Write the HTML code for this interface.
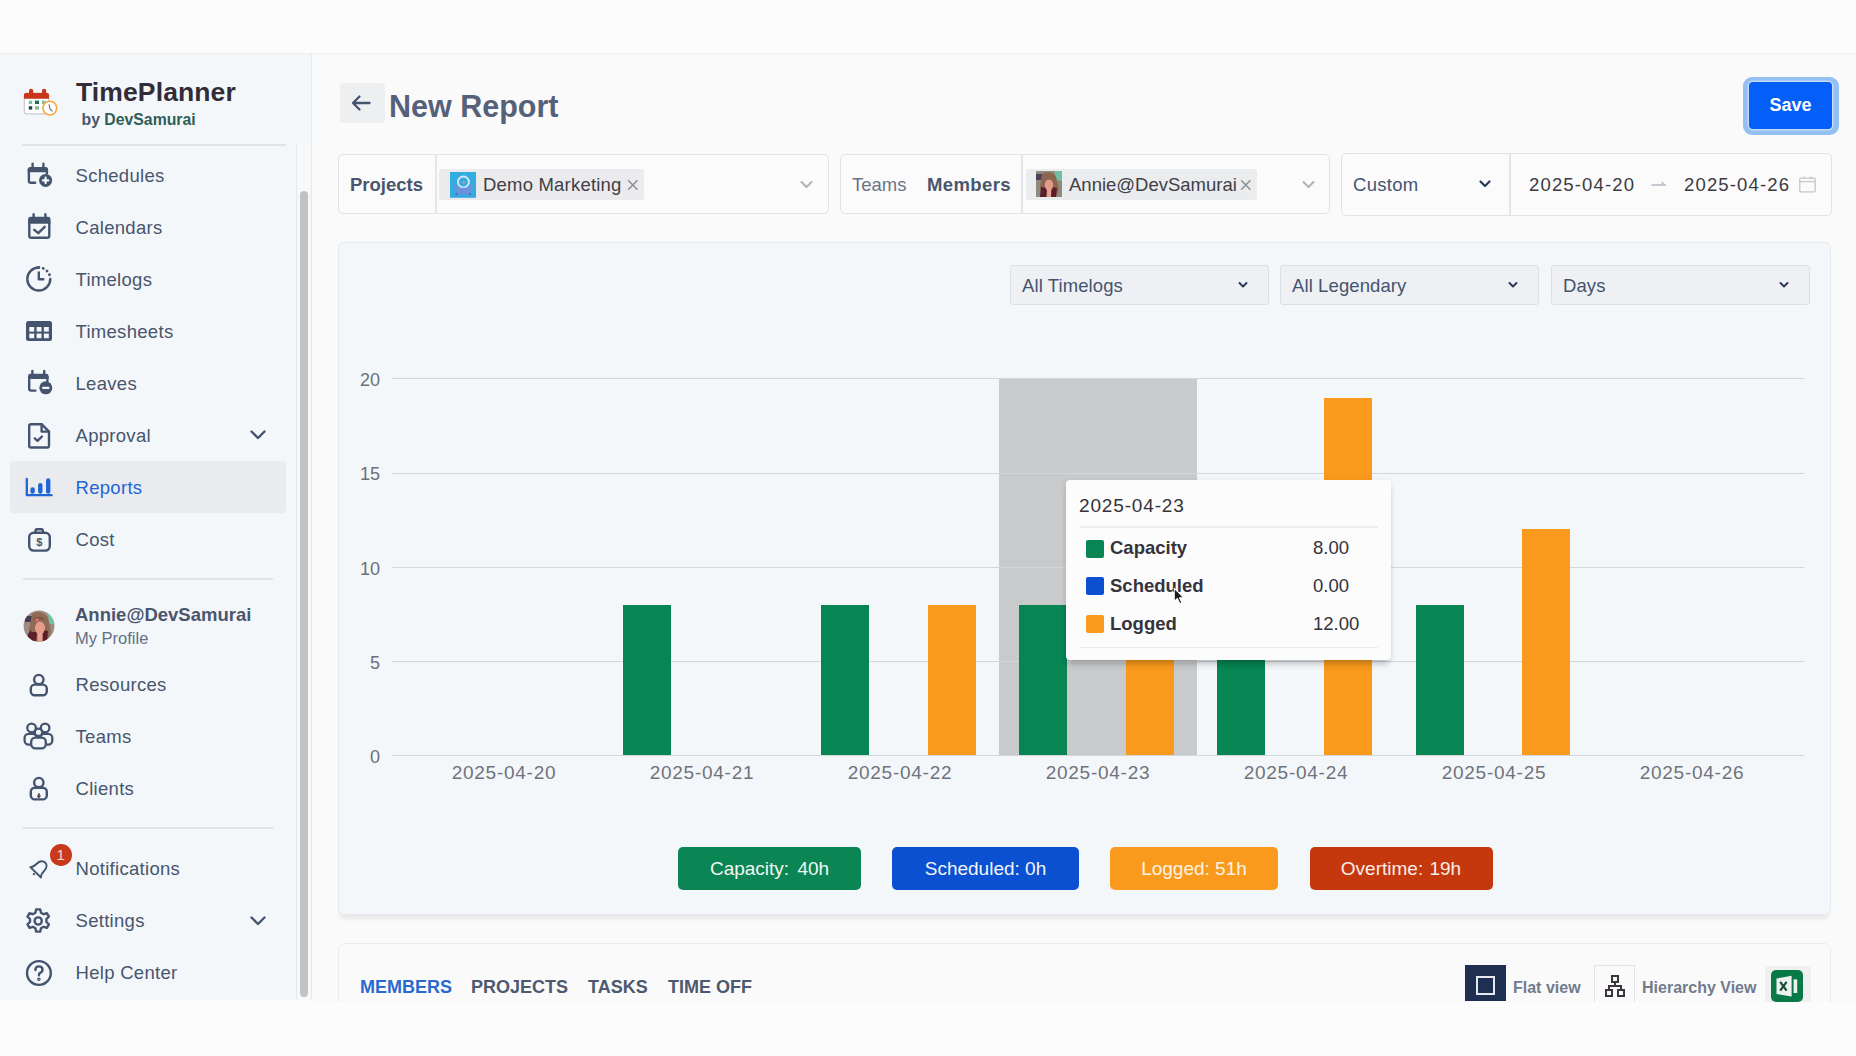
<!DOCTYPE html>
<html><head><meta charset="utf-8">
<style>
*{box-sizing:border-box;margin:0;padding:0}
html,body{width:1856px;height:1056px;overflow:hidden;background:#fcfcfc;font-family:"Liberation Sans",sans-serif;color:#44546f}
.abs{position:absolute}
.t{position:absolute;white-space:nowrap}
#topline{left:0;top:53px;width:1856px;height:1px;background:#eceef1}
#side{left:0;top:54px;width:311px;height:946px;background:#f4f7fa}
#sideborder{left:311px;top:54px;width:1px;height:946px;background:#e8e8e9}
#main{left:312px;top:54px;width:1544px;height:948px;background:#fafafa}
.nav{position:absolute;left:75.5px;margin-top:1px;height:30px;line-height:30px;font-size:18.5px;letter-spacing:0.3px;color:#47556d;white-space:nowrap}
.ico{position:absolute;left:0;top:0}
.sep{position:absolute;height:2px;background:#dfe2e6}
</style></head><body>
<div id="topline" class="abs"></div>
<div id="side" class="abs"></div>
<div id="sideborder" class="abs"></div>
<div id="main" class="abs"></div>

<!-- SIDEBAR -->
<!-- logo -->
<svg class="abs" style="left:18px;top:82px" width="44" height="40" viewBox="0 0 44 40">
  <rect x="6.3" y="11" width="24.4" height="20.8" rx="2" fill="#fff" stroke="#c9c9cb" stroke-width="1.2"/>
  <path d="M6 13 q0-2 2-2 h21 q2 0 2 2 v3.8 h-25z" fill="#c9361a"/>
  <rect x="11" y="6.8" width="4.2" height="6" rx="2" fill="#c9361a"/>
  <rect x="24" y="6.8" width="4.2" height="6" rx="2" fill="#c9361a"/>
  <rect x="10.8" y="18.6" width="3.4" height="3.4" fill="#7fbf9f"/>
  <rect x="17" y="18.6" width="4" height="3.4" fill="#1e6e4c"/>
  <rect x="24" y="18.6" width="3.4" height="3.4" fill="#7fbf9f"/>
  <rect x="10.8" y="24.2" width="3.4" height="3.4" fill="#1d473f"/>
  <rect x="17" y="24.2" width="4" height="3.4" fill="#7fbf9f"/>
  <circle cx="31.8" cy="26.1" r="6.9" fill="#fff" stroke="#f4a93b" stroke-width="1.6"/>
  <path d="M31 22.3 L32 27 L34.6 29.3" fill="none" stroke="#6a6e77" stroke-width="1.1"/>
</svg>
<div class="t" style="left:76px;top:77px;font-size:26.5px;letter-spacing:0.12px;line-height:30px;font-weight:bold;color:#322b38">TimePlanner</div>
<div class="t" style="left:81.5px;top:109.5px;font-size:15.8px;line-height:20px;font-weight:bold;color:#4a566c">by <span style="color:#2f5d57">DevSamurai</span></div>
<div class="sep" style="left:22px;top:144px;width:264px"></div>

<!-- nav items -->
<div class="nav" style="top:160px">Schedules</div>
<div class="nav" style="top:212px">Calendars</div>
<div class="nav" style="top:264px">Timelogs</div>
<div class="nav" style="top:316px">Timesheets</div>
<div class="nav" style="top:368px">Leaves</div>
<div class="nav" style="top:420px">Approval</div>
<div class="abs" style="left:10px;top:461px;width:276px;height:52px;background:#e9ebee;border-radius:4px"></div>
<div class="nav" style="top:472px;color:#1f66d6">Reports</div>
<div class="nav" style="top:524px">Cost</div>
<div class="sep" style="left:23px;top:578px;width:250px"></div>

<!-- nav icons -->
<svg class="abs" style="left:22px;top:158px" width="32" height="32" viewBox="0 0 32 32" fill="none" stroke="#44546f" stroke-width="2.4" stroke-linecap="round" stroke-linejoin="round">
  <path d="M13.2 24.8 H9 Q6.9 24.8 6.9 22.7 V12"/>
  <path d="M24.9 12 V15.6"/>
  <path d="M5.7 14.2 V11.4 Q5.7 8.9 8.2 8.9 H23.6 Q26.1 8.9 26.1 11.4 V14.2 Z" fill="#44546f" stroke="none"/>
  <path d="M10.6 5.8 v3.4 M21.4 5.8 v3.4"/>
  <circle cx="23.6" cy="22.4" r="6.5" fill="#44546f" stroke="none"/>
  <path d="M23.6 19.7 v5.4 M20.9 22.4 h5.4" stroke="#f4f7fa" stroke-width="2.2"/>
</svg>
<svg class="abs" style="left:22px;top:210px" width="32" height="32" viewBox="0 0 32 32" fill="none" stroke="#44546f" stroke-width="2.4" stroke-linecap="round" stroke-linejoin="round">
  <path d="M7.3 12 V25.7 Q7.3 27.8 9.4 27.8 H25.2 Q27.3 27.8 27.3 25.7 V12"/>
  <path d="M6.1 13.8 V9.4 Q6.1 6.8 8.7 6.8 H25.9 Q28.5 6.8 28.5 9.4 V13.8 Z" fill="#44546f" stroke="none"/>
  <path d="M11.6 4.2 v3.4 M23.4 4.2 v3.4"/>
  <path d="M12.2 19.8 l4.1 3.4 l6.4-6.4"/>
</svg>
<svg class="abs" style="left:22px;top:262px" width="32" height="32" viewBox="0 0 32 32" fill="none" stroke="#44546f" stroke-width="2.4" stroke-linecap="round" stroke-linejoin="round">
  <path d="M16.8 5.5 A11.5 11.5 0 1 0 28.3 17"/>
  <path d="M16.8 5.5 A11.5 11.5 0 0 1 28.3 17" stroke-dasharray="0.1 4.4" stroke-width="2.8"/>
  <path d="M16.8 10.5 v6.8 h4.5"/>
</svg>
<svg class="abs" style="left:22px;top:314px" width="32" height="32" viewBox="0 0 32 32">
  <rect x="4" y="7" width="26" height="20" rx="2.5" fill="#44546f"/>
  <rect x="7.3" y="13" width="4.9" height="4.6" fill="#f4f7fa"/>
  <rect x="14.6" y="13" width="4.9" height="4.6" fill="#f4f7fa"/>
  <rect x="21.9" y="13" width="4.9" height="4.6" fill="#f4f7fa"/>
  <rect x="7.3" y="19.6" width="4.9" height="4.6" fill="#f4f7fa"/>
  <rect x="14.6" y="19.6" width="4.9" height="4.6" fill="#f4f7fa"/>
  <rect x="21.9" y="19.6" width="4.9" height="4.6" fill="#f4f7fa"/>
</svg>
<svg class="abs" style="left:22px;top:366px" width="32" height="32" viewBox="0 0 32 32" fill="none" stroke="#44546f" stroke-width="2.4" stroke-linecap="round" stroke-linejoin="round">
  <path d="M13.4 24.6 H9.2 Q7.2 24.6 7.2 22.6 V11"/>
  <path d="M25.4 11 V15"/>
  <path d="M6 13 V10.2 Q6 7.8 8.4 7.8 H24.2 Q26.6 7.8 26.6 10.2 V13 Z" fill="#44546f" stroke="none"/>
  <path d="M10.4 5 v3.2 M22.2 5 v3.2"/>
  <circle cx="23.8" cy="21.8" r="6.5" fill="#44546f" stroke="none"/>
  <path d="M21.1 21.8 h5.4" stroke="#f4f7fa" stroke-width="2.2"/>
</svg>
<svg class="abs" style="left:22px;top:418px" width="32" height="32" viewBox="0 0 32 32" fill="none" stroke="#44546f" stroke-width="2.4" stroke-linecap="round" stroke-linejoin="round">
  <path d="M19.6 6.2 H9 q-1.8 0-1.8 1.8 V27.7 q0 1.8 1.8 1.8 h16.2 q1.8 0 1.8-1.8 V13.6 Z"/>
  <path d="M19.6 6.2 v7.4 h7.4"/>
  <path d="M12.8 20.4 l2.7 2.5 l4.4-4.4"/>
</svg>
<svg class="abs" style="left:22px;top:470px" width="32" height="32" viewBox="0 0 32 32" fill="none" stroke="#1f66d6" stroke-linecap="round" stroke-linejoin="round">
  <path d="M4.8 8.8 V25.2 H29.6" stroke-width="2.3"/>
  <path d="M10.6 19.4 v2.2" stroke-width="4.4"/>
  <path d="M18.3 15.2 v6.4" stroke-width="4.4"/>
  <path d="M26.2 10.4 v11.2" stroke-width="4.4"/>
</svg>
<svg class="abs" style="left:22px;top:522px" width="32" height="32" viewBox="0 0 32 32" fill="none" stroke="#44546f" stroke-width="2.4" stroke-linecap="round" stroke-linejoin="round">
  <path d="M13.6 10.8 V8.5 q0-1.3 1.3-1.3 h4.6 q1.3 0 1.3 1.3 v2.3"/>
  <rect x="7.2" y="10.8" width="20.6" height="17.8" rx="4.5"/>
  <text x="17.3" y="24.3" font-family="Liberation Sans" font-weight="bold" font-size="11" fill="#44546f" stroke="none" text-anchor="middle">$</text>
</svg>



<!-- chevrons -->
<svg class="abs" style="left:247px;top:425px" width="22" height="20" viewBox="0 0 22 20" fill="none" stroke="#44546f" stroke-width="2.4" stroke-linecap="round" stroke-linejoin="round"><path d="M4.5 6.5 l6.5 6.5 l6.5-6.5"/></svg>
<!-- profile -->
<svg class="abs" style="left:23px;top:610px" width="32" height="32" viewBox="0 0 32 32">
  <defs><clipPath id="av1"><circle cx="16" cy="16" r="15.4"/></clipPath></defs>
  <g clip-path="url(#av1)">
    <rect width="32" height="32" fill="#9d8c84"/>
    <rect x="2" y="6" width="7" height="6" fill="#4a3a52"/>
    <path d="M24 2 L32 6 L32 14 L27 14 Z" fill="#74c4a4"/>
    <path d="M9 4 C14 1 22 2 25 8 L28 22 L24 32 L8 32 L6 20 Z" fill="#8f6a55"/>
    <path d="M8 20 C9 24 10 30 12 32 L4 32 L5 24 Z" fill="#5a1f2b"/>
    <path d="M8.5 22 L14 22 L13 32 L9 32 Z" fill="#5e1e2a"/>
    <path d="M20 20 L25 21 L24 32 L19 32 Z" fill="#5a1e2a"/>
    <ellipse cx="17" cy="18" rx="5" ry="6.5" fill="#e69c8a"/>
    <rect x="14.5" y="23" width="5" height="9" fill="#e7a595"/>
    <path d="M11 9 C13 6 20 6 22 10 C19 9 14 9 11 11Z" fill="#7a5742"/>
    <circle cx="14" cy="10" r="1.8" fill="#e7745c"/>
  </g>
</svg>
<div class="t" style="left:75px;top:603px;font-size:18.5px;line-height:24px;font-weight:bold;color:#4a566c">Annie@DevSamurai</div>
<div class="t" style="left:75px;top:628px;font-size:16.5px;line-height:20px;color:#626f86">My Profile</div>
<div class="nav" style="top:669px">Resources</div>
<div class="nav" style="top:721px">Teams</div>
<div class="nav" style="top:773px">Clients</div>
<svg class="abs" style="left:22px;top:669px" width="32" height="32" viewBox="0 0 32 32" fill="none" stroke="#44546f" stroke-width="2.4" stroke-linecap="round" stroke-linejoin="round">
  <circle cx="16.8" cy="10.6" r="4.7"/>
  <rect x="8.8" y="15.6" width="16" height="10.6" rx="4"/>
</svg>
<svg class="abs" style="left:22px;top:721px" width="32" height="32" viewBox="0 0 32 32" fill="none" stroke="#44546f" stroke-width="2.3" stroke-linecap="round" stroke-linejoin="round">
  <circle cx="9.6" cy="6.9" r="4.3"/>
  <circle cx="23.1" cy="6.9" r="4.3"/>
  <rect x="2.6" y="12.8" width="12" height="10.8" rx="4"/>
  <rect x="18.3" y="12.8" width="12" height="10.8" rx="4"/>
  <circle cx="16.5" cy="11.3" r="3.7" fill="#f4f7fa"/>
  <rect x="9.2" y="16.6" width="14.6" height="10.8" rx="4.2" fill="#f4f7fa"/>
</svg>
<svg class="abs" style="left:22px;top:773px" width="32" height="32" viewBox="0 0 32 32" fill="none" stroke="#44546f" stroke-width="2.4" stroke-linecap="round" stroke-linejoin="round">
  <circle cx="16.8" cy="9.6" r="4.7"/>
  <rect x="8.8" y="14.8" width="16" height="11.6" rx="4"/>
  <path d="M16.8 20.4 l-1.3 3.2 l1.3 1.4 l1.3-1.4z" fill="#5b3a44" stroke="#5b3a44" stroke-width="0.8"/>
</svg>
<div class="sep" style="left:23px;top:827px;width:250px"></div>
<!-- notifications -->
<div class="nav" style="top:853px">Notifications</div>
<svg class="abs" style="left:22px;top:850px" width="32" height="34" viewBox="0 0 32 34" fill="none" stroke="#44546f" stroke-width="2.3" stroke-linecap="round" stroke-linejoin="round">
  <g transform="translate(17.6 18.2) rotate(44) scale(0.86)">
    <path d="M-8.6 6.6 C-6.4 4.6 -6 2.6 -6 -1.4 C-6 -6.4 -3.2 -9.2 0 -9.2 C3.2 -9.2 6 -6.4 6 -1.4 C6 2.6 6.4 4.6 8.6 6.6 Z"/>
    <circle cx="0" cy="9.6" r="1.3" fill="#44546f" stroke="none"/>
  </g>
</svg>
<div class="abs" style="left:49.5px;top:844px;width:22.5px;height:22px;border-radius:50%;background:#c9391c;color:#f6dcd5;font-weight:normal;font-size:15px;line-height:22px;text-align:center">1</div>
<div class="nav" style="top:905px">Settings</div>
<svg class="abs" style="left:22px;top:905px" width="32" height="32" viewBox="0 0 32 32" fill="none" stroke="#44546f" stroke-width="2.4" stroke-linecap="round" stroke-linejoin="round">
  <path d="M14.2 4.4 h4 l0.8 3.3 l2.6 1.5 l3.3-1 l2 3.4 l-2.5 2.4 v3 l2.5 2.4 l-2 3.4 l-3.3-1 l-2.6 1.5 l-0.8 3.3 h-4 l-0.8-3.3 l-2.6-1.5 l-3.3 1 l-2-3.4 l2.5-2.4 v-3 l-2.5-2.4 l2-3.4 l3.3 1 l2.6-1.5z"/>
  <circle cx="16.2" cy="16" r="3.6"/>
</svg>
<svg class="abs" style="left:247px;top:911px" width="22" height="20" viewBox="0 0 22 20" fill="none" stroke="#44546f" stroke-width="2.4" stroke-linecap="round" stroke-linejoin="round"><path d="M4.5 6.5 l6.5 6.5 l6.5-6.5"/></svg>
<div class="nav" style="top:957px">Help Center</div>
<svg class="abs" style="left:22px;top:957px" width="32" height="32" viewBox="0 0 32 32" fill="none" stroke="#44546f" stroke-width="2.4" stroke-linecap="round" stroke-linejoin="round">
  <circle cx="16.9" cy="16" r="11.9"/>
  <path d="M13.4 13 q0-3.6 3.5-3.6 q3.6 0 3.6 3.3 q0 2.2-2.4 3.2 q-1.2 0.6-1.2 2.4"/>
  <circle cx="16.9" cy="22.2" r="0.6" fill="#44546f"/>
</svg>
<!-- scrollbar -->
<div class="abs" style="left:296px;top:144px;width:15px;height:856px;background:#f6f8fa;border-left:1px solid #e6e8ea"></div>
<div class="abs" style="left:300px;top:191px;width:8px;height:806px;background:#c1c2c4;border-radius:4px"></div>


<!-- MAIN HEADER -->
<div class="abs" style="left:340px;top:83px;width:45px;height:40px;background:#eeeff1;border-radius:4px"></div>
<svg class="abs" style="left:348px;top:91px" width="26" height="24" viewBox="0 0 26 24" fill="none" stroke="#44546f" stroke-width="2.3" stroke-linecap="round" stroke-linejoin="round"><path d="M21.5 12 H5.5 M11.5 5.5 L5 12 L11.5 18.5"/></svg>
<div class="t" style="left:389px;top:89px;font-size:30.5px;line-height:34px;font-weight:bold;color:#55617a">New Report</div>
<div class="abs" style="left:1742.5px;top:76.5px;width:96px;height:58.5px;border-radius:9px;background:#93bff2"></div>
<div class="abs" style="left:1748.6px;top:82.4px;width:83.7px;height:46.8px;border-radius:4px;background:#045ef8;box-shadow:0 0 0 1.5px #c6dbf6;color:#fff;font-weight:bold;font-size:18px;line-height:46px;text-align:center">Save</div>

<!-- FILTERS -->
<div class="abs" style="left:338px;top:154px;width:491px;height:60px;border:1.5px solid #e1e3e7;border-radius:5px;background:#fbfbfc"></div>
<div class="abs" style="left:435px;top:155px;width:1.5px;height:58px;background:#e4e6ea"></div>
<div class="t" style="left:350px;top:169.8px;font-size:18.5px;line-height:30px;font-weight:bold;color:#4a566c">Projects</div>
<div class="abs" style="left:439.3px;top:169px;width:204.7px;height:30.5px;background:#ebebed;border-radius:3px"></div>
<svg class="abs" style="left:449.6px;top:171.6px" width="26.4" height="26.4" viewBox="0 0 26 26">
  <rect width="26" height="26" fill="#33ade0"/>
  <rect y="25" width="26" height="1" fill="#7fb8ee"/>
  <circle cx="13.2" cy="9.8" r="5.4" fill="none" stroke="#d6e6f8" stroke-width="1.9"/>
  <path d="M3.6 13.6 L6.4 12.2 L8.6 15.6 H18 L20.2 12.2 L23 13.6 L21 20 L19.8 22.4 H6.8 L5.6 20 Z" fill="#6a92da"/>
  <circle cx="13.4" cy="10" r="1.5" fill="#8fa3c4"/>
  <path d="M6.6 21 l-0.6 1.8 M19.6 21 l0.6 1.8" stroke="#3a62c8" stroke-width="1.4"/>
</svg>
<div class="t" style="left:483px;top:169.8px;font-size:18.5px;letter-spacing:0.2px;line-height:30px;color:#423e46">Demo Marketing</div>
<svg class="abs" style="left:626px;top:178px" width="14" height="14" viewBox="0 0 14 14" stroke="#8d9097" stroke-width="1.6" stroke-linecap="round"><path d="M2.6 2.8 L11 11.2 M11 2.8 L2.6 11.2"/></svg>
<svg class="abs" style="left:797px;top:176px" width="18" height="16" viewBox="0 0 18 16" fill="none" stroke="#adb1b8" stroke-width="2" stroke-linecap="round" stroke-linejoin="round"><path d="M4.5 6 l5 5 l5-5"/></svg>

<div class="abs" style="left:840px;top:154px;width:490px;height:60px;border:1.5px solid #e1e3e7;border-radius:5px;background:#fbfbfc"></div>
<div class="abs" style="left:1021px;top:155px;width:1.5px;height:58px;background:#e4e6ea"></div>
<div class="t" style="left:852px;top:169.8px;font-size:18.5px;line-height:30px;color:#6b7486">Teams</div>
<div class="t" style="left:927px;top:169.8px;font-size:18.5px;letter-spacing:0.4px;line-height:30px;font-weight:bold;color:#4a566c">Members</div>
<div class="abs" style="left:1026px;top:169px;width:231px;height:31px;background:#ebecee;border-radius:3px"></div>
<svg class="abs" style="left:1036px;top:171px" width="26" height="26" viewBox="0 0 26 26">
  <rect width="26" height="26" fill="#8f8a80"/>
  <rect x="0" y="3" width="6" height="6" fill="#50405a"/>
  <path d="M18 0 L26 0 L26 10 L21 9 Z" fill="#72bfa2"/>
  <path d="M6 3 C10 0 18 1 20 6 L23 18 L20 26 L6 26 L4 16 Z" fill="#8c6650"/>
  <path d="M5 16 L11 17 L10 26 L4 26 Z" fill="#5a1f2b"/>
  <path d="M16 16 L21 17 L20 26 L15 26 Z" fill="#5a1e2a"/>
  <ellipse cx="13" cy="14" rx="4.2" ry="5.5" fill="#e39a88"/>
  <rect x="11" y="18" width="4" height="8" fill="#e6a394"/>
</svg>
<div class="t" style="left:1069px;top:169.8px;font-size:18.5px;line-height:30px;color:#423e46">Annie@DevSamurai</div>
<svg class="abs" style="left:1239px;top:178px" width="14" height="14" viewBox="0 0 14 14" stroke="#8d9097" stroke-width="1.6" stroke-linecap="round"><path d="M2.6 2.8 L11 11.2 M11 2.8 L2.6 11.2"/></svg>
<svg class="abs" style="left:1299px;top:176px" width="18" height="16" viewBox="0 0 18 16" fill="none" stroke="#adb1b8" stroke-width="2" stroke-linecap="round" stroke-linejoin="round"><path d="M4.5 6 l5 5 l5-5"/></svg>

<div class="abs" style="left:1341px;top:153px;width:491px;height:63px;border:1.5px solid #e1e3e7;border-radius:5px;background:#fbfbfc"></div>
<div class="abs" style="left:1509px;top:154px;width:1.5px;height:61px;background:#e4e6ea"></div>
<div class="t" style="left:1353px;top:169.8px;font-size:18.5px;letter-spacing:0.3px;line-height:30px;color:#44546f">Custom</div>
<svg class="abs" style="left:1477px;top:177px" width="16" height="14" viewBox="0 0 16 14" fill="none" stroke="#2b3a57" stroke-width="2.2" stroke-linecap="round" stroke-linejoin="round"><path d="M3.5 4.5 l4.5 4.5 l4.5-4.5"/></svg>
<div class="t" style="left:1529px;top:170px;font-size:18.5px;letter-spacing:1.15px;line-height:30px;color:#3b3a41">2025-04-20</div>
<svg class="abs" style="left:1649px;top:176px" width="20" height="16" viewBox="0 0 20 16" fill="none" stroke="#b6bac2" stroke-width="1.4" stroke-linecap="round"><path d="M3 9 h13 l-3-2.5"/></svg>
<div class="t" style="left:1684px;top:170px;font-size:18.5px;letter-spacing:1.15px;line-height:30px;color:#3b3a41">2025-04-26</div>
<svg class="abs" style="left:1797px;top:174px" width="22" height="22" viewBox="0 0 22 22" fill="none" stroke="#c3c6cc" stroke-width="1.3"><rect x="2.8" y="4.2" width="15.4" height="13.6" rx="0.8"/><path d="M2.8 7.6 h15.4 M7 2.6 v2.6 M14 2.6 v2.6"/></svg>


<!-- CHART CARD -->
<div class="abs" style="left:338px;top:242px;width:1493px;height:673px;background:#f4f7fa;border:1.5px solid #e6e9ed;border-radius:6px;box-shadow:0 6px 4px -2px rgba(0,0,0,0.075)"></div>
<div class="abs" style="left:1010px;top:265px;width:259px;height:40px;background:#eef0f3;border:1.5px solid #dcdfe3;border-radius:3px"></div>
<div class="t" style="left:1022px;top:271px;font-size:18.5px;letter-spacing:0.1px;line-height:30px;color:#44546f">All Timelogs</div>
<div class="abs" style="left:1280px;top:265px;width:259px;height:40px;background:#eef0f3;border:1.5px solid #dcdfe3;border-radius:3px"></div>
<div class="t" style="left:1292px;top:271px;font-size:18.5px;letter-spacing:0.1px;line-height:30px;color:#44546f">All Legendary</div>
<div class="abs" style="left:1551px;top:265px;width:259px;height:40px;background:#eef0f3;border:1.5px solid #dcdfe3;border-radius:3px"></div>
<div class="t" style="left:1563px;top:271px;font-size:18.5px;letter-spacing:0.1px;line-height:30px;color:#44546f">Days</div>
<svg class="abs" style="left:1235px;top:278px" width="16" height="14" viewBox="0 0 16 14" fill="none" stroke="#2b3a57" stroke-width="2" stroke-linecap="round" stroke-linejoin="round"><path d="M4.5 5 l3.5 3.5 l3.5-3.5"/></svg>
<svg class="abs" style="left:1505px;top:278px" width="16" height="14" viewBox="0 0 16 14" fill="none" stroke="#2b3a57" stroke-width="2" stroke-linecap="round" stroke-linejoin="round"><path d="M4.5 5 l3.5 3.5 l3.5-3.5"/></svg>
<svg class="abs" style="left:1776px;top:278px" width="16" height="14" viewBox="0 0 16 14" fill="none" stroke="#2b3a57" stroke-width="2" stroke-linecap="round" stroke-linejoin="round"><path d="M4.5 5 l3.5 3.5 l3.5-3.5"/></svg>

<div class="abs" style="left:999.3px;top:378px;width:198.1px;height:377px;background:#c9cacc"></div>
<div class="abs" style="left:392px;top:378px;width:1412px;height:1px;background:#d3d6db"></div>
<div class="t" style="left:330px;width:50px;text-align:right;top:367.5px;font-size:18px;line-height:24px;color:#6b707b">20</div>
<div class="abs" style="left:392px;top:472.5px;width:1412px;height:1px;background:#d3d6db"></div>
<div class="t" style="left:330px;width:50px;text-align:right;top:462.0px;font-size:18px;line-height:24px;color:#6b707b">15</div>
<div class="abs" style="left:392px;top:567px;width:1412px;height:1px;background:#d3d6db"></div>
<div class="t" style="left:330px;width:50px;text-align:right;top:556.5px;font-size:18px;line-height:24px;color:#6b707b">10</div>
<div class="abs" style="left:392px;top:661px;width:1412px;height:1px;background:#d3d6db"></div>
<div class="t" style="left:330px;width:50px;text-align:right;top:650.5px;font-size:18px;line-height:24px;color:#6b707b">5</div>
<div class="abs" style="left:392px;top:755px;width:1412px;height:1px;background:#d3d6db"></div>
<div class="t" style="left:330px;width:50px;text-align:right;top:744.5px;font-size:18px;line-height:24px;color:#6b707b">0</div>

<div class="abs bar" style="left:623.1px;top:604.6px;width:48px;height:150.4px;background:#078553"></div>
<div class="abs bar" style="left:821.2px;top:604.6px;width:48px;height:150.4px;background:#078553"></div>
<div class="abs bar" style="left:927.7px;top:604.6px;width:48px;height:150.4px;background:#fa9a1c"></div>
<div class="abs bar" style="left:1019.3px;top:604.6px;width:48px;height:150.4px;background:#078553"></div>
<div class="abs bar" style="left:1125.8px;top:529.4px;width:48px;height:225.6px;background:#fa9a1c"></div>
<div class="abs bar" style="left:1217.4px;top:604.6px;width:48px;height:150.4px;background:#078553"></div>
<div class="abs bar" style="left:1323.9px;top:397.8px;width:48px;height:357.2px;background:#fa9a1c"></div>
<div class="abs bar" style="left:1415.5px;top:604.6px;width:48px;height:150.4px;background:#078553"></div>
<div class="abs bar" style="left:1522.0px;top:529.4px;width:48px;height:225.6px;background:#fa9a1c"></div>

<div class="t" style="left:434px;width:140px;text-align:center;top:761px;font-size:19px;letter-spacing:0.75px;line-height:24px;color:#6e737d">2025-04-20</div>
<div class="t" style="left:632px;width:140px;text-align:center;top:761px;font-size:19px;letter-spacing:0.75px;line-height:24px;color:#6e737d">2025-04-21</div>
<div class="t" style="left:830px;width:140px;text-align:center;top:761px;font-size:19px;letter-spacing:0.75px;line-height:24px;color:#6e737d">2025-04-22</div>
<div class="t" style="left:1028px;width:140px;text-align:center;top:761px;font-size:19px;letter-spacing:0.75px;line-height:24px;color:#6e737d">2025-04-23</div>
<div class="t" style="left:1226px;width:140px;text-align:center;top:761px;font-size:19px;letter-spacing:0.75px;line-height:24px;color:#6e737d">2025-04-24</div>
<div class="t" style="left:1424px;width:140px;text-align:center;top:761px;font-size:19px;letter-spacing:0.75px;line-height:24px;color:#6e737d">2025-04-25</div>
<div class="t" style="left:1622px;width:140px;text-align:center;top:761px;font-size:19px;letter-spacing:0.75px;line-height:24px;color:#6e737d">2025-04-26</div>

<!-- tooltip -->
<div class="abs" style="left:1066px;top:480px;width:325px;height:180px;background:#fcfcfc;border-radius:4px;box-shadow:0 6px 6px -2px rgba(0,0,0,0.2),0 1px 6px rgba(0,0,0,0.08)"></div>
<div class="t" style="left:1079px;top:494px;font-size:19px;letter-spacing:0.85px;line-height:24px;color:#35333a">2025-04-23</div>
<div class="abs" style="left:1080px;top:526px;width:298px;height:1.5px;background:#ececee"></div>
<div class="abs" style="left:1080px;top:646.5px;width:298px;height:1.5px;background:#ececee"></div>
<div class="abs" style="left:1085.5px;top:539.5px;width:18px;height:18px;border-radius:2px;background:#078553"></div>
<div class="abs" style="left:1085.5px;top:577px;width:18px;height:18px;border-radius:2px;background:#0d4fd1"></div>
<div class="abs" style="left:1085.5px;top:614.5px;width:18px;height:18px;border-radius:2px;background:#fa9a1c"></div>
<div class="t" style="left:1110px;top:536px;font-size:18.5px;line-height:24px;font-weight:bold;color:#36333c">Capacity</div>
<div class="t" style="left:1110px;top:574px;font-size:18.5px;line-height:24px;font-weight:bold;color:#36333c">Scheduled</div>
<div class="t" style="left:1110px;top:611.5px;font-size:18.5px;line-height:24px;font-weight:bold;color:#36333c">Logged</div>
<div class="t" style="left:1313px;top:536px;font-size:18.5px;line-height:24px;color:#33333a">8.00</div>
<div class="t" style="left:1313px;top:574px;font-size:18.5px;line-height:24px;color:#33333a">0.00</div>
<div class="t" style="left:1313px;top:611.5px;font-size:18.5px;line-height:24px;color:#33333a">12.00</div>
<svg class="abs" style="left:1172.5px;top:587px" width="14" height="22" viewBox="0 0 14 22"><g transform="scale(0.85)"><path d="M1.5 1.5 L1.5 17 L5.2 13.4 L8 19.6 L10.4 18.6 L7.7 12.6 L12.6 12.4 Z" fill="#1a1a1a" stroke="#fff" stroke-width="1.2" stroke-linejoin="round"/></g></svg>

<!-- legend -->
<div class="abs" style="left:678px;top:847px;width:183px;height:43px;border-radius:5px;background:#0a8553;color:#f2f7f4;font-size:19px;line-height:43px;text-align:center;word-spacing:3px">Capacity: 40h</div>
<div class="abs" style="left:892px;top:847px;width:187px;height:43px;border-radius:5px;background:#0b50d0;color:#f2f5fb;font-size:19px;line-height:43px;text-align:center;word-spacing:0px">Scheduled: 0h</div>
<div class="abs" style="left:1110px;top:847px;width:168px;height:43px;border-radius:5px;background:#fa9a1c;color:#fdf3e3;font-size:19px;line-height:43px;text-align:center;word-spacing:0px">Logged: 51h</div>
<div class="abs" style="left:1309.5px;top:847px;width:183px;height:43px;border-radius:5px;background:#c5380e;color:#f9ece7;font-size:19px;line-height:43px;text-align:center;word-spacing:1px">Overtime: 19h</div>

<!-- BOTTOM CARD -->
<div class="abs" style="left:338px;top:943px;width:1493px;height:80px;background:#fafafa;border:1.5px solid #ebebed;border-radius:7px"></div>
<div class="t" style="left:360px;top:975px;font-size:18px;line-height:24px;font-weight:bold;color:#2b68cf">MEMBERS</div>
<div class="t" style="left:471px;top:975px;font-size:18px;line-height:24px;font-weight:bold;color:#4d596e">PROJECTS</div>
<div class="t" style="left:588px;top:975px;font-size:18px;line-height:24px;font-weight:bold;color:#4d596e">TASKS</div>
<div class="t" style="left:668px;top:975px;font-size:18px;line-height:24px;font-weight:bold;color:#4d596e">TIME OFF</div>
<div class="abs" style="left:1465px;top:965px;width:41px;height:36px;background:#1f2f52"></div>
<div class="abs" style="left:1476px;top:976px;width:19px;height:19px;border:2px solid #e6e9ef"></div>
<div class="t" style="left:1513px;top:975.5px;font-size:16px;line-height:24px;font-weight:bold;color:#717b8d">Flat view</div>
<div class="abs" style="left:1594px;top:965px;width:41px;height:40px;border:1.5px solid #e3e4e8;border-bottom:none"></div>
<svg class="abs" style="left:1603px;top:974px" width="24" height="24" viewBox="0 0 24 24" fill="none" stroke="#3d3540" stroke-width="2"><rect x="9" y="2" width="6" height="6"/><rect x="3" y="16" width="6" height="6"/><rect x="15" y="16" width="6" height="6"/><path d="M12 8 v4 M6 16 v-4 h12 v4"/></svg>
<div class="t" style="left:1642px;top:975.5px;font-size:16px;line-height:24px;font-weight:bold;color:#717b8d">Hierarchy View</div>
<div class="abs" style="left:1765px;top:966px;width:46px;height:38px;background:#f0f0f1;border-radius:3px"></div>
<svg class="abs" style="left:1771px;top:970px" width="32" height="32" viewBox="0 0 32 32"><rect width="32" height="32" rx="5" fill="#087a48"/><path d="M5.5 8.6 L20.6 5.8 V26.6 L5.5 24 Z" fill="#eef2ee"/><rect x="22.6" y="9.4" width="3.6" height="13.6" fill="#eef2ee"/><path d="M9.2 11.8 L15.6 20.6 M15.6 11.8 L9.2 20.6" stroke="#174a3a" stroke-width="2.2"/></svg>

<!-- bottom white strip -->
<div class="abs" style="left:0;top:1001.5px;width:1856px;height:55px;background:#fcfcfc"></div>

</body></html>
